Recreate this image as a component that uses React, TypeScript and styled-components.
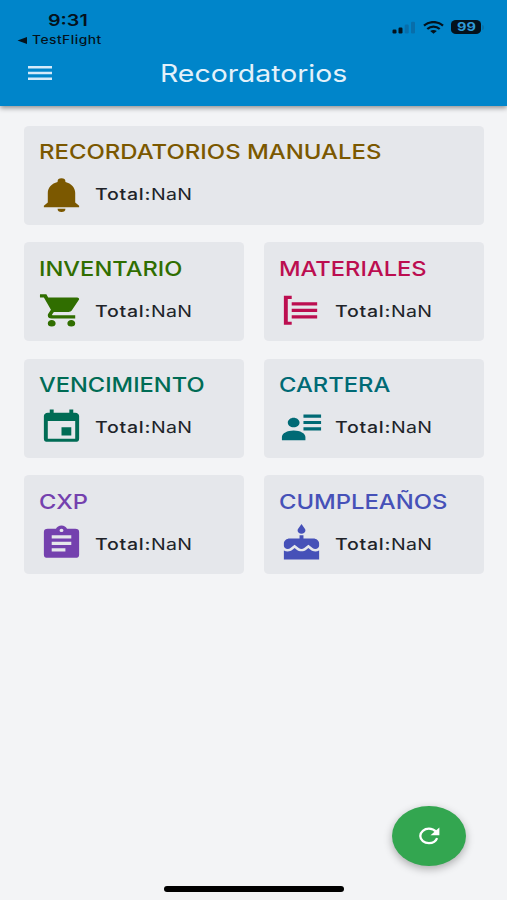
import React from 'react';
import styled, { createGlobalStyle } from 'styled-components';

const GlobalStyle = createGlobalStyle`
  * { box-sizing: border-box; }
  body { margin: 0; background: #f3f4f6; font-family: Inter, "Liberation Sans", sans-serif; }
`;

const Screen = styled.div`
  height: 900px;
  width: 507px;
  overflow: hidden;
  display: flex;
  flex-direction: column;
  background: #f3f4f6;
`;

const Header = styled.header`
  height: 106px;
  flex: none;
  background: #0085ca;
  box-shadow: 0 2px 5px rgba(0, 0, 0, 0.42);
  display: flex;
  flex-direction: column;
`;

const StatusBar = styled.div`
  height: 50px;
  padding: 10px 23px 0 17px;
  display: flex;
  justify-content: space-between;
  color: #04121c;
`;

const StatusLeft = styled.div`
  display: flex;
  flex-direction: column;
`;

const WideText = styled.span<{ $scale: number }>`
  display: block;
  width: max-content;
  white-space: nowrap;
  transform: scaleX(${(p) => p.$scale});
  transform-origin: 0 50%;
`;

const Clock = styled(WideText)`
  margin-left: 31px;
  font-size: 16px;
  line-height: 20px;
  font-weight: 600;
`;

const BackLink = styled.div`
  display: flex;
  align-items: center;
  gap: 5px;
  height: 21px;
`;

const BackLabel = styled(WideText)`
  font-size: 11.5px;
  line-height: 20px;
  font-weight: 500;
  letter-spacing: 0.4px;
`;

const StatusRight = styled.div`
  display: flex;
  align-items: center;
  height: 14px;
  margin-top: 10px;
  gap: 7px;
`;

const Battery = styled.div`
  width: 30px;
  height: 14px;
  border-radius: 5px / 4px;
  background: #04121c;
  color: #2f9bd8;
  display: flex;
  align-items: center;
  justify-content: center;
`;

const BatteryLevel = styled.span`
  font-size: 11.5px;
  line-height: 14px;
  font-weight: 700;
  transform: scaleX(1.26);
`;

const BatteryTip = styled.i`
  width: 2px;
  height: 5px;
  margin-left: -6px;
  border-radius: 0 2px 2px 0;
  background: #0873ad;
`;

const TitleBar = styled.div`
  height: 46px;
  padding-left: 28px;
  display: flex;
  align-items: center;
`;

const PageTitle = styled.h1`
  margin: 1px 0 0 108px;
  font-size: 24px;
  line-height: 30px;
  font-weight: 400;
  color: #e3f1fa;
`;

const Grid = styled.main`
  flex: 1;
  padding: 19.8px 23.5px 0 24px;
  display: grid;
  grid-template-columns: 1fr 1fr;
  grid-auto-rows: 99px;
  align-content: start;
  gap: 17.5px 20.5px;
`;

const Card = styled.section<{ $wide?: boolean }>`
  grid-column: ${(p) => (p.$wide ? '1 / -1' : 'auto')};
  padding: 14.6px 0 0 15px;
  border-radius: 5px / 4px;
  background: #e5e7eb;
`;

const CardTitle = styled.h2<{ $color: string }>`
  margin: 0;
  font-size: 20px;
  line-height: 24px;
  font-weight: 500;
  color: ${(p) => p.$color};
`;

const CardBody = styled.div`
  display: flex;
  align-items: center;
  height: 39px;
  margin: 10.4px 0 0 -0.7px;
`;

const CardIcon = styled.svg<{ $color: string }>`
  width: 47px;
  height: 38.7px;
  margin-right: 9.7px;
  flex: none;
  fill: ${(p) => p.$color};
`;

const Total = styled(WideText)`
  font-size: 16px;
  line-height: 20px;
  letter-spacing: 0.25px;
  color: #202329;
  b { font-weight: 500; letter-spacing: 0.6px; }
`;

const BottomArea = styled.footer`
  flex: none;
  display: flex;
  flex-direction: column;
  align-items: center;
  height: 94px;
`;

const RefreshButton = styled.button`
  width: 74px;
  height: 60px;
  margin-right: 41px;
  align-self: flex-end;
  padding: 0;
  border: 0;
  border-radius: 50%;
  background: #33a650;
  box-shadow: 0 3px 9px rgba(0, 0, 0, 0.3);
  display: flex;
  align-items: center;
  justify-content: center;
`;

const HomeIndicator = styled.div`
  width: 180px;
  height: 5.5px;
  margin-top: 20px;
  border-radius: 3px;
  background: #000;
`;

interface Reminder {
  title: string;
  color: string;
  path: string;
  scale: number;
  wide?: boolean;
}

const reminders: Reminder[] = [
  {
    title: 'RECORDATORIOS MANUALES', color: '#7b5800', wide: true, scale: 1.196,
    path: 'M21 19V20H3V19L5 17V11C5 7.9 7.03 5.17 10 4.29V4A2 2 0 0 1 14 4V4.29C16.97 5.17 19 7.9 19 11V17L21 19M14 21A2 2 0 0 1 10 21Z',
  },
  {
    title: 'INVENTARIO', color: '#306e00', scale: 1.183,
    path: 'M17,18C15.89,18 15,18.89 15,20A2,2 0 0,0 17,22A2,2 0 0,0 19,20C19,18.89 18.1,18 17,18M1,2V4H3L6.6,11.59L5.24,14.04C5.09,14.32 5,14.65 5,15A2,2 0 0,0 7,17H19V15H7.42A0.25,0.25 0 0,1 7.17,14.75C7.17,14.7 7.18,14.66 7.2,14.63L8.1,13H15.55C16.3,13 16.96,12.58 17.3,11.97L20.88,5.5C20.95,5.34 21,5.17 21,5A1,1 0 0,0 20,4H5.21L4.27,2M7,18C5.89,18 5,18.89 5,20A2,2 0 0,0 7,22A2,2 0 0,0 9,20C9,18.89 8.1,18 7,18Z',
  },
  {
    title: 'MATERIALES', color: '#bc0e50', scale: 1.184,
    path: 'M5 5V19H7V21H3V3H7V5H5M20 7H7V9H20V7M20 11H7V13H20V11M20 15H7V17H20V15Z',
  },
  {
    title: 'VENCIMIENTO', color: '#006c55', scale: 1.181,
    path: 'M19,19H5V8H19M16,1V3H8V1H6V3H5C3.89,3 3,3.89 3,5V19A2,2 0 0,0 5,21H19A2,2 0 0,0 21,19V5C21,3.89 20.1,3 19,3H18V1M17,12H12V17H17V12Z',
  },
  {
    title: 'CARTERA', color: '#006a75', scale: 1.188,
    path: 'M11 9C11 10.66 9.66 12 8 12S5 10.66 5 9S6.34 6 8 6S11 7.34 11 9M14 20H2V18C2 15.79 4.69 14 8 14S14 15.79 14 18M22 12V14H13V12M22 8V10H13V8M22 4V6H13V4Z',
  },
  {
    title: 'CXP', color: '#7441ae', scale: 1.183,
    path: 'M17,9H7V7H17M17,13H7V11H17M14,17H7V15H14M12,3A1,1 0 0,1 13,4A1,1 0 0,1 12,5A1,1 0 0,1 11,4A1,1 0 0,1 12,3M19,3H14.82C14.4,1.84 13.3,1 12,1C10.7,1 9.6,1.84 9.18,3H5A2,2 0 0,0 3,5V19A2,2 0 0,0 5,21H19A2,2 0 0,0 21,19V5A2,2 0 0,0 19,3Z',
  },
  {
    title: 'CUMPLEAÑOS', color: '#4651b8', scale: 1.19,
    path: 'M12 6c1.11 0 2-.9 2-2 0-.38-.1-.73-.29-1.03L12 0l-1.71 2.97c-.19.3-.29.65-.29 1.03 0 1.1.9 2 2 2zm4.6 9.99l-1.07-1.07-1.08 1.07c-1.3 1.3-3.58 1.31-4.89 0l-1.07-1.07-1.09 1.07C6.75 16.64 5.88 17 4.96 17c-.73 0-1.4-.23-1.96-.61V22h18v-5.61c-.56.38-1.23.61-1.96.61-.92 0-1.79-.36-2.44-1.01zM18 9h-5V7h-2v2H6c-1.66 0-3 1.34-3 3v1.54c0 1.08.88 1.96 1.96 1.96.52 0 1.02-.2 1.38-.57l2.14-2.13 2.13 2.13c.74.74 2.03.74 2.77 0l2.14-2.13 2.13 2.13c.37.37.86.57 1.38.57 1.08 0 1.96-.88 1.96-1.96V12C21 10.34 19.66 9 18 9z',
  },
];

const SignalIcon = () => (
  <svg width="24" height="13" viewBox="0 0 24 13">
    <rect x="0.5" y="8.5" width="4" height="4" rx="1.2" fill="#04121c" />
    <rect x="6.5" y="6.5" width="4" height="6" rx="1.2" fill="#04121c" />
    <rect x="12.7" y="3.5" width="4" height="9" rx="1.2" fill="#086eaa" />
    <rect x="19" y="0.8" width="4" height="11.7" rx="1.2" fill="#086eaa" />
  </svg>
);

const WifiIcon = () => (
  <svg width="21" height="13" viewBox="0 0 21 13" fill="none" stroke="#04121c" strokeWidth="2.3">
    <path d="M1 4.6C6.3-.1 14.7-.1 20 4.6" />
    <path d="M4.3 8C7.9 4.9 13.1 4.9 16.7 8" />
    <path d="M7.2 10.1C9.2 8.600 11.800 8.600 13.800 10.100L10.500 12.700Z" fill="#04121c" stroke="none" />
  </svg>
);

export default function App() {
  return (
    <>
      <GlobalStyle />
      <Screen>
        <Header>
          <StatusBar>
            <StatusLeft>
              <Clock $scale={1.23}>9:31</Clock>
              <BackLink>
                <svg width="10" height="7" viewBox="0 0 10 7"><path d="M0.5 3.5L10 0V7Z" fill="#04121c" /></svg>
                <BackLabel $scale={1.2}>TestFlight</BackLabel>
              </BackLink>
            </StatusLeft>
            <StatusRight>
              <SignalIcon />
              <WifiIcon />
              <Battery><BatteryLevel>99</BatteryLevel></Battery>
              <BatteryTip />
            </StatusRight>
          </StatusBar>
          <TitleBar>
            <svg width="24" height="14" viewBox="0 0 24 14" fill="#d5eafa">
              <path d="M0 0H24V2.500H0ZM0 5.750H24V8.250H0ZM0 11.500H24V14H0Z" />
            </svg>
            <PageTitle><WideText $scale={1.183}>Recordatorios</WideText></PageTitle>
          </TitleBar>
        </Header>
        <Grid>
          {reminders.map((r) => (
            <Card key={r.title} $wide={r.wide}>
              <CardTitle $color={r.color}><WideText $scale={r.scale}>{r.title}</WideText></CardTitle>
              <CardBody>
                <CardIcon viewBox="0 0 24 24" preserveAspectRatio="none" $color={r.color}>
                  <path d={r.path} />
                </CardIcon>
                <Total $scale={1.22}><b>Total:</b>NaN</Total>
              </CardBody>
            </Card>
          ))}
        </Grid>
        <BottomArea>
          <RefreshButton aria-label="Actualizar">
            <svg width="24" height="20" viewBox="0 0 24 20" fill="none">
              <path d="M20.100 12.200C18.800 15.600 15.600 17.200 11.900 17.200C7.200 17.200 3.300 14 3.300 10C3.300 6 7.200 2.700 11.900 2.700C15.400 2.700 17.600 4.200 20 6.500" stroke="#fff" strokeWidth="2.300" />
              <path d="M22.400 1.600V9.200H13.500Z" fill="#fff" />
            </svg>
          </RefreshButton>
          <HomeIndicator />
        </BottomArea>
      </Screen>
    </>
  );
}
